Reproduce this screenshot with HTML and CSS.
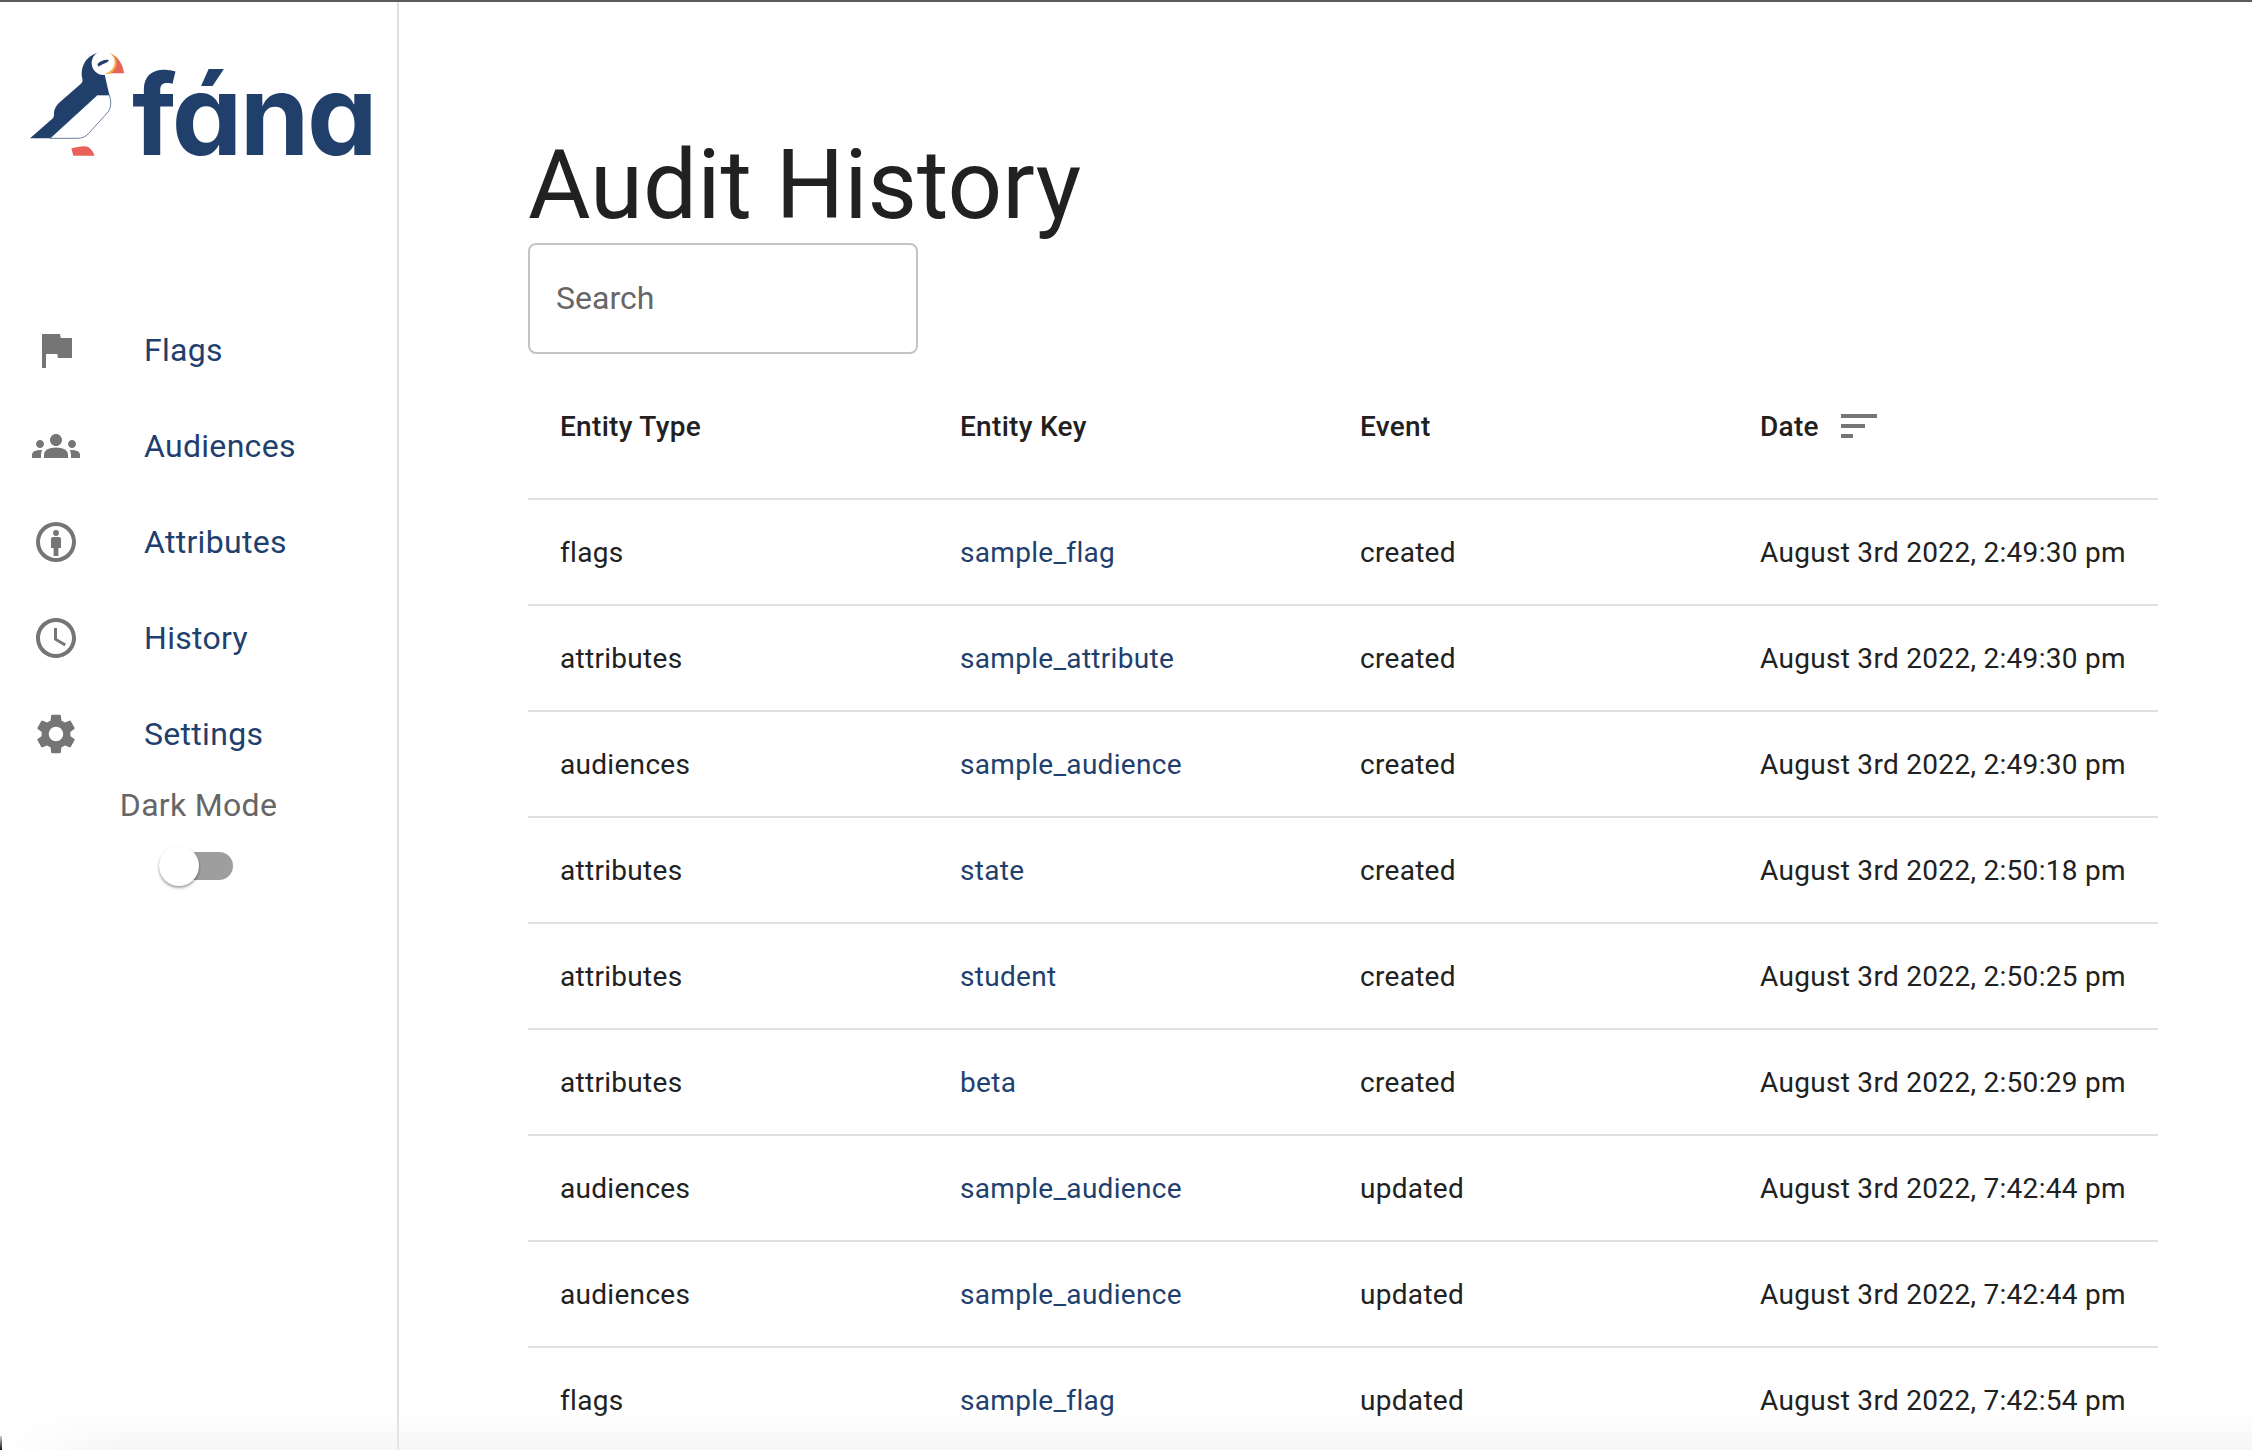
FILE: index.html
```html
<!DOCTYPE html>
<html lang="en">
<head>
<meta charset="utf-8">
<title>Audit History</title>
<link rel="stylesheet" href="styles.css">
</head>
<body>
<div class="app">
  <aside class="sidebar">
    <div class="logo">
      <svg class="puffin" viewBox="0 0 390 360" width="130" height="120" aria-hidden="true">
        <path fill="#fff" stroke="#213f6b" stroke-width="2" d="M262 165H298C304 185 304 200 295 215L238 278C228 290 215 295 200 295H120Z"/>
        <path fill="#213f6b" d="M60 295L127 236C132 232 132 226 132 218C133 205 142 193 150 186L212 132C218 127 219 122 216 112C210 70 240 38 278 37L285 108L298 165H262L120 295Z"/>
        <path fill="#e8625a" d="M300 40C325 50 340 75 342 100H292C312 85 312 60 300 40Z"/>
        <circle cx="281" cy="69" r="36" fill="#fff"/>
        <path fill="#f2b33d" d="M296 37C322 55 322 88 284 102L300 101C326 85 326 55 304 41Z"/>
        <path fill="#213f6b" d="M262 73C270 63 285 58 296 60C296 68 280 70 266 80Z"/>
        <path fill="#e8625a" d="M184 325C205 320 222 316 235 321C245 328 250 338 254 347H190Z"/>
      </svg>
      <span class="wordmark">fána</span>
    </div>
    <nav class="nav">
      <a class="nav-item"><svg class="icon" viewBox="0 0 24 24"><path d="M14.4 6L14 4H5v17h2v-7h5.6l.4 2h7V6z"/></svg><span>Flags</span></a>
      <a class="nav-item"><svg class="icon" viewBox="0 0 24 24"><path d="M12 12.75c1.63 0 3.07.39 4.24.9 1.08.48 1.76 1.56 1.76 2.73V18H6v-1.61c0-1.18.68-2.26 1.76-2.73 1.17-.52 2.61-.91 4.24-.91zM4 13c1.1 0 2-.9 2-2s-.9-2-2-2-2 .9-2 2 .9 2 2 2zm1.13 1.1c-.37-.06-.74-.1-1.13-.1-.99 0-1.93.21-2.78.58C.48 14.9 0 15.62 0 16.43V18h4.5v-1.61c0-.83.23-1.61.63-2.29zM20 13c1.1 0 2-.9 2-2s-.9-2-2-2-2 .9-2 2 .9 2 2 2zm4 3.43c0-.81-.48-1.53-1.22-1.85-.85-.37-1.79-.58-2.78-.58-.39 0-.76.04-1.13.1.4.68.63 1.46.63 2.29V18H24v-1.57zM12 6c1.66 0 3 1.34 3 3s-1.34 3-3 3-3-1.34-3-3 1.34-3 3-3z"/></svg><span>Audiences</span></a>
      <a class="nav-item"><svg class="icon" viewBox="0 0 24 24"><path fill-rule="evenodd" d="M12 2a10 10 0 1 0 0 20 10 10 0 0 0 0-20zm0 2a8 8 0 1 1 0 16 8 8 0 0 1 0-16z"/><circle cx="12" cy="7.5" r="1.5"/><path d="M9.5 10.5c0-.6.4-1 1-1h3c.6 0 1 .4 1 1V15h-1.3v4h-2.4v-4H9.5z"/></svg><span>Attributes</span></a>
      <a class="nav-item"><svg class="icon" viewBox="0 0 24 24"><path d="M11.99 2C6.47 2 2 6.48 2 12s4.47 10 9.99 10C17.52 22 22 17.52 22 12S17.52 2 11.99 2zM12 20c-4.42 0-8-3.58-8-8s3.58-8 8-8 8 3.58 8 8-3.58 8-8 8zm.5-13H11v6l5.25 3.15.75-1.23-4.5-2.67z"/></svg><span>History</span></a>
      <a class="nav-item"><svg class="icon" viewBox="0 0 24 24"><path d="M19.14 12.94c.04-.3.06-.61.06-.94 0-.32-.02-.64-.07-.94l2.03-1.58c.18-.14.23-.41.12-.61l-1.92-3.32c-.12-.22-.37-.29-.59-.22l-2.39.96c-.5-.38-1.03-.7-1.62-.94l-.36-2.54c-.04-.24-.24-.41-.48-.41h-3.84c-.24 0-.43.17-.47.41l-.36 2.54c-.59.24-1.13.57-1.62.94l-2.39-.96c-.22-.08-.47 0-.59.22L2.74 8.87c-.12.21-.08.47.12.61l2.03 1.58c-.05.3-.09.63-.09.94s.02.64.07.94l-2.03 1.58c-.18.14-.23.41-.12.61l1.92 3.32c.12.22.37.29.59.22l2.39-.96c.5.38 1.03.7 1.62.94l.36 2.54c.05.24.24.41.48.41h3.84c.24 0 .44-.17.47-.41l.36-2.54c.59-.24 1.13-.56 1.62-.94l2.39.96c.22.08.47 0 .59-.22l1.92-3.32c.12-.22.07-.47-.12-.61l-2.01-1.58zM12 15.6c-1.98 0-3.6-1.62-3.6-3.6s1.62-3.6 3.6-3.6 3.6 1.62 3.6 3.6-1.62 3.6-3.6 3.6z"/></svg><span>Settings</span></a>
    </nav>
    <div class="dark-mode">
      <span class="dark-label">Dark Mode</span>
      <span class="switch"><span class="thumb"></span></span>
    </div>
  </aside>
  <main class="main">
    <h1 class="title">Audit History</h1>
    <div class="search"><span>Search</span></div>
    <table class="table">
      <thead>
        <tr>
          <th>Entity Type</th>
          <th>Entity Key</th>
          <th>Event</th>
          <th><span class="date-head">Date<svg class="sort" viewBox="0 0 24 24"><path d="M3 18h6v-2H3v2zM3 6v2h18V6H3zm0 7h12v-2H3v2z"/></svg></span></th>
        </tr>
      </thead>
      <tbody>
        <tr><td>flags</td><td><a>sample_flag</a></td><td>created</td><td>August 3rd 2022, 2:49:30 pm</td></tr>
        <tr><td>attributes</td><td><a>sample_attribute</a></td><td>created</td><td>August 3rd 2022, 2:49:30 pm</td></tr>
        <tr><td>audiences</td><td><a>sample_audience</a></td><td>created</td><td>August 3rd 2022, 2:49:30 pm</td></tr>
        <tr><td>attributes</td><td><a>state</a></td><td>created</td><td>August 3rd 2022, 2:50:18 pm</td></tr>
        <tr><td>attributes</td><td><a>student</a></td><td>created</td><td>August 3rd 2022, 2:50:25 pm</td></tr>
        <tr><td>attributes</td><td><a>beta</a></td><td>created</td><td>August 3rd 2022, 2:50:29 pm</td></tr>
        <tr><td>audiences</td><td><a>sample_audience</a></td><td>updated</td><td>August 3rd 2022, 7:42:44 pm</td></tr>
        <tr><td>audiences</td><td><a>sample_audience</a></td><td>updated</td><td>August 3rd 2022, 7:42:44 pm</td></tr>
        <tr><td>flags</td><td><a>sample_flag</a></td><td>updated</td><td>August 3rd 2022, 7:42:54 pm</td></tr>
      </tbody>
    </table>
  </main>
</div>
<div class="bottom-shade"></div>
<div class="corner"></div>
</body>
</html>
```

FILE: styles.css
```css
* { box-sizing: border-box; }
html, body { margin: 0; height: 100%; overflow: hidden; background: #fff; }
body { font-family: Roboto, "Liberation Sans", sans-serif; color: #212121; }

.app { display: flex; height: 1450px; border-top: 2px solid #5b5b5d; overflow: hidden; }

.sidebar { flex: 0 0 399px; height: 1448px; border-right: 2px solid #e0e0e0; }
.logo { height: 300px; padding: 38px 0 0 10px; display: flex; align-items: flex-start; }
.puffin { display: block; flex: none; }
.wordmark {
  font-family: Inter, "Noto Sans", sans-serif;
  font-feature-settings: "cv11" 1;
  font-weight: 700;
  font-size: 112px;
  line-height: 120px;
  color: #213f6b;
  margin: 14px 0 0 -8px;
  letter-spacing: -2.5px;
}

.nav { display: flex; flex-direction: column; }
.nav-item { display: flex; align-items: center; height: 96px; padding-left: 32px; font-size: 32px; letter-spacing: 0.3px; color: #1f3f6e; }
.icon { width: 48px; height: 48px; fill: #757575; flex: none; margin-right: 64px; }

.dark-mode { display: flex; flex-direction: column; align-items: center; margin-top: 3px; }
.dark-label { font-size: 32px; letter-spacing: 0.3px; line-height: 40px; color: #666; }
.switch { position: relative; display: block; width: 68px; height: 28px; margin: 27px 0 0 0; border-radius: 14px; background: #9e9e9e; }
.thumb { position: absolute; left: -6px; top: -6px; width: 40px; height: 40px; border-radius: 50%; background: #fff; box-shadow: 0 2px 3px rgba(0,0,0,.3), 0 1px 2px rgba(0,0,0,.15); }

.main { flex: 1; padding: 0 94px 0 129px; }
.title { margin: 126px 0 0; font-size: 96px; font-weight: 400; line-height: 115px; color: #212121; }
.search { width: 390px; height: 111px; border: 2px solid #c4c4c4; border-radius: 8px; display: flex; align-items: center; padding: 0 0 2px 26px; font-size: 32px; color: #666; }

.table { width: 100%; border-collapse: collapse; table-layout: fixed; font-size: 28px; letter-spacing: 0.3px; }
.table th, .table td { text-align: left; padding: 0 32px; border-bottom: 2px solid #e0e0e0; white-space: nowrap; }
.table th { height: 145px; font-weight: 500; }
.table td { height: 106px; }
.table th:nth-child(-n+3), .table td:nth-child(-n+3) { width: 400px; }
.table a { color: #1f3f6e; }
.date-head { display: inline-flex; align-items: center; }
.sort { width: 48px; height: 48px; fill: #757575; margin-left: 16px; }

.bottom-shade { position: fixed; left: 0; right: 0; bottom: 0; height: 40px; background: linear-gradient(to bottom, rgba(238,238,238,0), rgba(238,238,238,.55)); -webkit-mask-image: linear-gradient(to right, transparent, #000 120px); mask-image: linear-gradient(to right, transparent, #000 120px); pointer-events: none; }
.corner { position: fixed; left: 0; bottom: 0; width: 2px; height: 14px; background: linear-gradient(to top, #111, rgba(17,17,17,.2)); }
```
